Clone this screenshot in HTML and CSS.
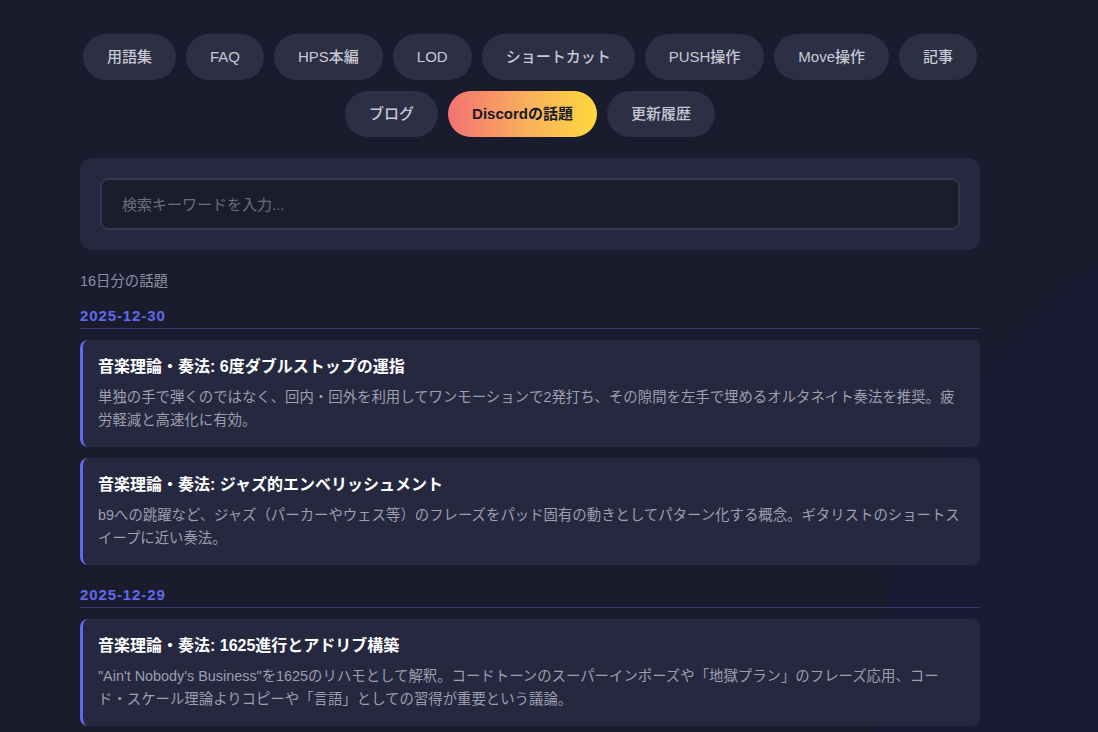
FILE: index.html
```html
<!DOCTYPE html>
<html lang="ja">
<head>
    <meta charset="UTF-8">
    <meta name="viewport" content="width=device-width, initial-scale=1.0">
    <title>Discordの話題</title>
    <link rel="stylesheet" href="styles.css">
</head>
<body>
    <div class="container">
        <nav class="nav">
            <a class="nav-pill" href="#">用語集</a>
            <a class="nav-pill" href="#">FAQ</a>
            <a class="nav-pill" href="#">HPS本編</a>
            <a class="nav-pill" href="#">LOD</a>
            <a class="nav-pill" href="#">ショートカット</a>
            <a class="nav-pill" href="#">PUSH操作</a>
            <a class="nav-pill" href="#">Move操作</a>
            <a class="nav-pill" href="#">記事</a>
            <a class="nav-pill" href="#">ブログ</a>
            <a class="nav-pill active" href="#">Discordの話題</a>
            <a class="nav-pill" href="#">更新履歴</a>
        </nav>

        <div class="search-box">
            <input type="text" class="search-input" placeholder="検索キーワードを入力...">
        </div>

        <div class="count">16日分の話題</div>

        <div class="day">
            <div class="day-date">2025-12-30</div>
            <div class="topic">
                <h3>音楽理論・奏法: 6度ダブルストップの運指</h3>
                <p>単独の手で弾くのではなく、回内・回外を利用してワンモーションで2発打ち、その隙間を左手で埋めるオルタネイト奏法を推奨。疲労軽減と高速化に有効。</p>
            </div>
            <div class="topic">
                <h3>音楽理論・奏法: ジャズ的エンベリッシュメント</h3>
                <p>b9への跳躍など、ジャズ（パーカーやウェス等）のフレーズをパッド固有の動きとしてパターン化する概念。ギタリストのショートスイープに近い奏法。</p>
            </div>
        </div>

        <div class="day">
            <div class="day-date">2025-12-29</div>
            <div class="topic">
                <h3>音楽理論・奏法: 1625進行とアドリブ構築</h3>
                <p>"Ain't Nobody's Business"を1625のリハモとして解釈。コードトーンのスーパーインポーズや「地獄プラン」のフレーズ応用、コード・スケール理論よりコピーや「言語」としての習得が重要という議論。</p>
            </div>
        </div>
    </div>
</body>
</html>
```

FILE: styles.css
```css
body {
    font-family: 'Liberation Sans', 'Noto Sans CJK JP', sans-serif;
    margin: 0;
    padding: 34px 0 40px;
    min-height: 100vh;
    box-sizing: border-box;
    color: #c8c9d4;
    background:
        radial-gradient(ellipse 700px 900px at 118% 95%, #1c1a36 0%, #1b1a34 60%, rgba(27, 26, 52, 0) 61%),
        #1a1c2e;
}
.container {
    width: 900px;
    margin-left: 80px;
}
.nav {
    display: flex;
    flex-wrap: wrap;
    justify-content: center;
    gap: 11px 10px;
    margin-bottom: 21px;
}
.nav-pill {
    display: inline-block;
    padding: 12px 24px;
    font-size: 15px;
    line-height: 22px;
    font-weight: 500;
    color: #c8c9d4;
    text-decoration: none;
    background-color: #2d2f45;
    border-radius: 999px;
}
.nav-pill.active {
    color: #1a1a2e;
    font-weight: bold;
    background: linear-gradient(90deg, #f47272 0%, #f9b25a 55%, #fdd83e 100%);
}
.search-box {
    background-color: #262840;
    padding: 20px;
    border-radius: 12px;
    margin-bottom: 21px;
}
.search-input {
    display: block;
    width: 100%;
    height: 52px;
    box-sizing: border-box;
    padding: 0 20px;
    font-family: inherit;
    font-size: 15px;
    color: #e0e0ea;
    background-color: #1c1d2c;
    border: 2px solid #34364e;
    border-radius: 8px;
    outline: none;
}
.search-input::placeholder {
    color: #6b6d7e;
}
.count {
    font-size: 14.4px;
    line-height: 20px;
    color: #8e8fa0;
    margin-bottom: 15px;
}
.day {
    margin-bottom: 20px;
}
.day-date {
    font-size: 15px;
    line-height: 20px;
    font-weight: bold;
    letter-spacing: 0.9px;
    color: #6168ea;
    padding-bottom: 2px;
    border-bottom: 1px solid rgba(99, 102, 241, 0.38);
    margin-bottom: 11px;
}
.topic {
    background-color: #262840;
    border-left: 3px solid #6366f1;
    border-radius: 8px;
    padding: 16px 15px 15px;
    margin-bottom: 11px;
}
.topic:last-child {
    margin-bottom: 0;
}
.topic h3 {
    margin: 0 0 8px;
    font-size: 16px;
    line-height: 22px;
    font-weight: bold;
    color: #ffffff;
}
.topic p {
    margin: 0;
    font-size: 14.4px;
    line-height: 23px;
    color: #9d9eae;
}
```
